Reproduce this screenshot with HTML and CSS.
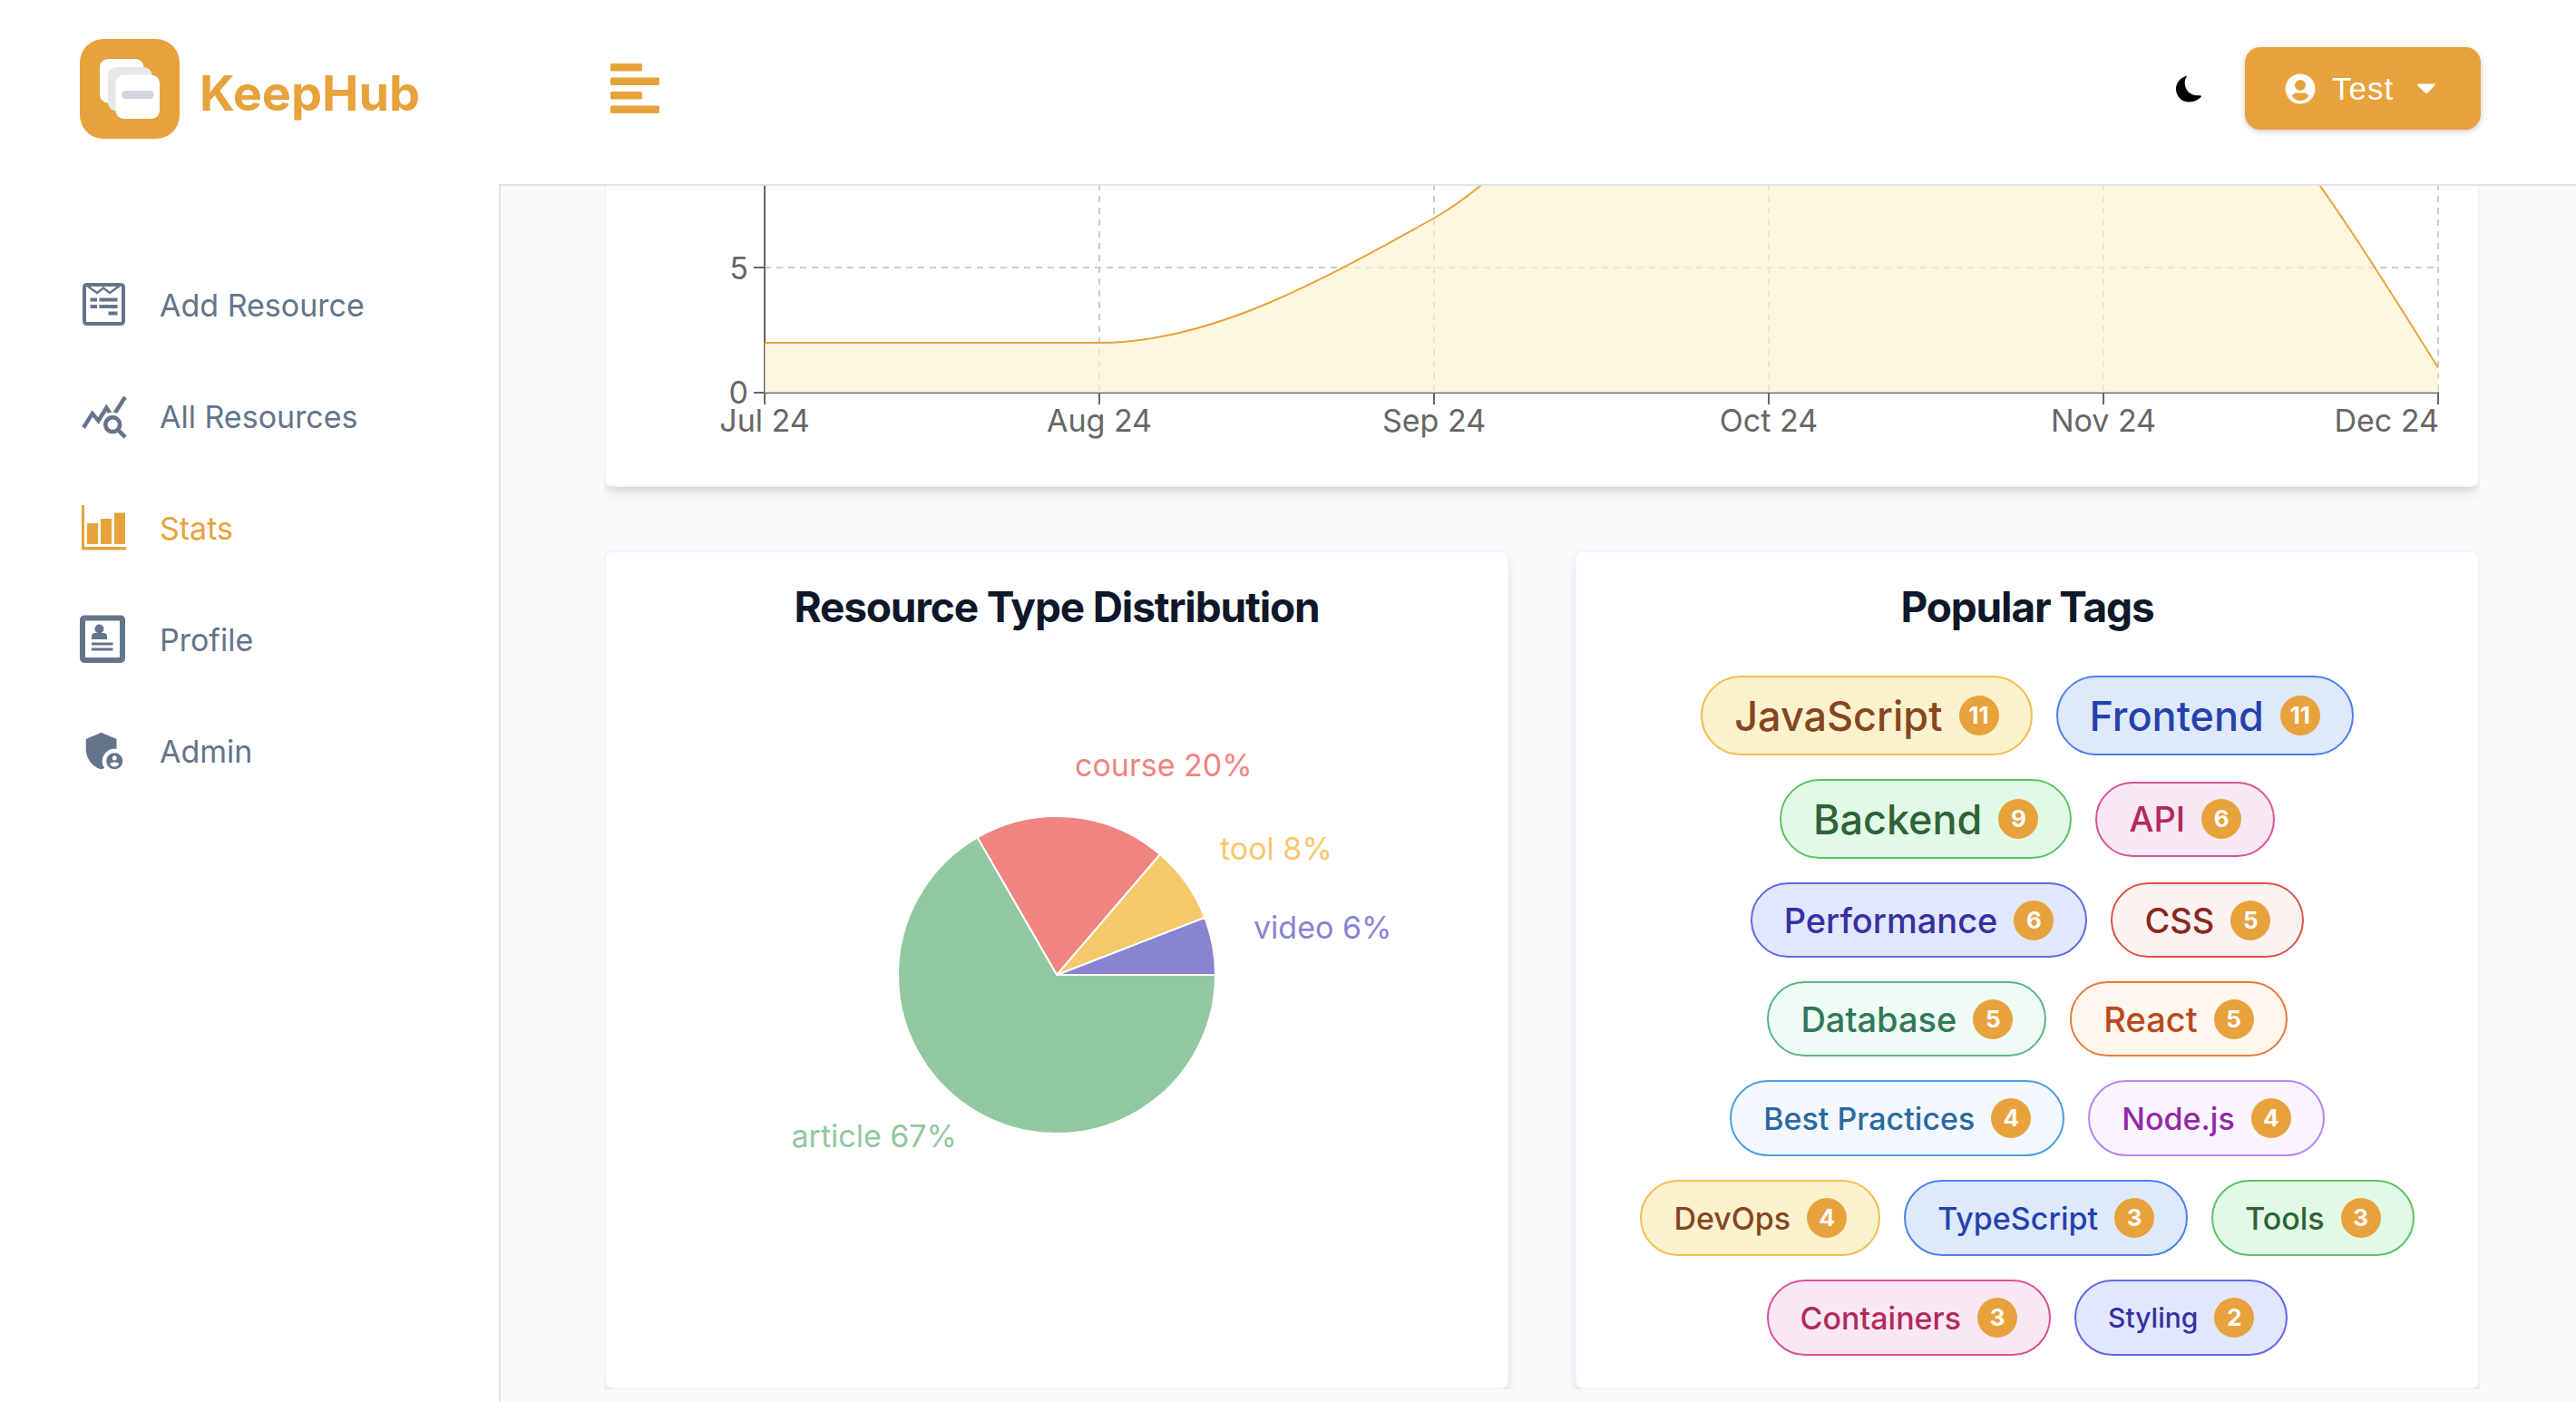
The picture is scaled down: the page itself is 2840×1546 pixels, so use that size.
FILE: index.html
```html
<!DOCTYPE html>
<html lang="en">
<head>
<meta charset="utf-8">
<meta name="viewport" content="width=device-width, initial-scale=1">
<title>KeepHub - Stats</title>
<link rel="stylesheet" href="styles.css">
</head>
<body>
<div class="app">
  <aside class="sidebar">
    <a class="brand" href="#">
      <svg class="brand-mark" viewBox="0 0 110 110" aria-hidden="true">
        <rect width="110" height="110" rx="26" fill="#e8a23c"/>
        <rect x="22" y="22" width="48.500" height="48.500" rx="9" fill="#fff"/>
        <rect x="31" y="31" width="48.500" height="48.500" rx="9" fill="#e5e7eb"/>
        <rect x="39.500" y="39.500" width="48.500" height="48.500" rx="9" fill="#fff"/>
        <rect x="46" y="57" width="35.500" height="9" rx="4.500" fill="#d1d5db"/>
      </svg>
      <span class="brand-name">KeepHub</span>
    </a>
    <nav class="nav">
      <a class="nav-link" href="#">
        <svg class="nav-icon" viewBox="0 0 54 54" aria-hidden="true">
          <rect x="5" y="5" width="43" height="43" rx="2.500" fill="none" stroke="currentColor" stroke-width="4"/>
          <path d="M8 6l11 8 7-5.500 7 5.500 11-8" fill="none" stroke="currentColor" stroke-width="2.500"/>
          <path d="M11.500 21.500h7.500M21.500 21.500h20M11.500 29h7.500M21.500 29h20M31.500 36.500h10" stroke="currentColor" stroke-width="4"/>
        </svg>
        <span>Add Resource</span>
      </a>
      <a class="nav-link" href="#">
        <svg class="nav-icon" viewBox="0 0 24 24" fill="currentColor" aria-hidden="true">
          <path d="M19.880 18.470c.44-.7.7-1.510.7-2.390 0-2.490-2.010-4.500-4.500-4.500s-4.500 2.010-4.500 4.500 2.010 4.500 4.490 4.500c.88 0 1.700-.26 2.390-.7L21.580 23 23 21.580l-3.120-3.110zm-3.800.11a2.500 2.500 0 010-5 2.500 2.500 0 010 5zm-.36-8.500c-.74.02-1.450.18-2.100.45l-.55-.83-3.800 6.180-3.010-3.520-3.630 5.810L1 17l5-8 3 3.500L13 6l2.720 4.080zm2.590.5c-.64-.28-1.330-.45-2.050-.49L21.380 2 23 3.180l-4.690 7.400z"/>
        </svg>
        <span>All Resources</span>
      </a>
      <a class="nav-link active" href="#" aria-current="page">
        <svg class="nav-icon" viewBox="0 0 54 54" fill="currentColor" aria-hidden="true">
          <path d="M2 2h3v46h46v3.500H2zM8 22h12v23H8zM23 17h12v28H23zM38 10.500h12V45H38z"/>
        </svg>
        <span>Stats</span>
      </a>
      <a class="nav-link" href="#">
        <svg class="nav-icon" viewBox="0 0 54 54" fill="currentColor" aria-hidden="true">
          <rect x="3" y="3.500" width="44" height="46.500" rx="2" fill="none" stroke="currentColor" stroke-width="6"/>
          <circle cx="21.500" cy="15.500" r="5"/>
          <path d="M13 27v-3q0-4 4-4h9q4 0 4 4v3zM13 30.500h23.500v3H13zM13 36.500h23.500v3H13z"/>
        </svg>
        <span>Profile</span>
      </a>
      <a class="nav-link" href="#">
        <svg class="nav-icon" viewBox="0 0 24 24" fill="currentColor" aria-hidden="true">
          <path d="M17 11c.34 0 .67.04 1 .09V6.270L10.500 3 3 6.270v4.910c0 4.540 3.200 8.790 7.500 9.820.55-.13 1.080-.32 1.600-.55-.69-.98-1.100-2.170-1.100-3.450 0-3.310 2.690-6 6-6z"/>
          <path d="M17 13c-2.210 0-4 1.790-4 4s1.790 4 4 4 4-1.790 4-4-1.790-4-4-4zm0 1.380c.62 0 1.120.51 1.120 1.120s-.51 1.120-1.120 1.120-1.120-.51-1.120-1.120.5-1.120 1.120-1.120zm0 5.370c-.93 0-1.740-.46-2.240-1.170.05-.72 1.510-1.080 2.240-1.080s2.190.36 2.240 1.080c-.5.71-1.310 1.170-2.240 1.170z"/>
        </svg>
        <span>Admin</span>
      </a>
    </nav>
  </aside>

  <div class="page">
    <header class="topbar">
      <button class="icon-button menu-button" type="button" aria-label="Toggle sidebar">
        <svg viewBox="0 0 56 56" width="56" height="56" fill="currentColor" aria-hidden="true">
          <rect x="1" y="0" width="35" height="8.500" rx="1.500"/>
          <rect x="1" y="15.500" width="54" height="8.500" rx="1.500"/>
          <rect x="1" y="31" width="35" height="8.500" rx="1.500"/>
          <rect x="1" y="46.500" width="54" height="8.500" rx="1.500"/>
        </svg>
      </button>
      <div class="topbar-actions">
        <button class="icon-button theme-button" type="button" aria-label="Dark mode">
          <svg viewBox="0 0 28 30" width="28" height="30" aria-hidden="true">
            <path d="M11 0.800C3.800 3.500 0 9 0 15.200C0 23.200 6.500 29.500 14.500 29.500C20.500 29.500 25.800 26.300 28 23.300C27.600 22.300 27.200 22 26 22.200C17 23.400 10 17.500 9.700 8.800C9.600 6 10.300 4 11.500 2C11.900 1.200 11.800 0.600 11 0.800Z"/>
          </svg>
        </button>
        <button class="user-button" type="button">
          <svg viewBox="0 0 34 34" width="34" height="34" aria-hidden="true">
            <path fill="currentColor" fill-rule="evenodd" d="M17 0.500a16.500 16.500 0 1 0 0 33a16.500 16.500 0 1 0 0-33zM17 7a6 6 0 1 1 0 12a6 6 0 1 1 0-12zM8 24.500C10 20.500 14 21.500 17 21.500S24 20.500 26.500 24.500C24 28.500 20.500 30 17 30S10 28.500 8 24.500z"/>
          </svg>
          <span>Test</span>
          <svg class="caret" viewBox="0 0 20 12" width="20" height="12" aria-hidden="true">
            <path fill="currentColor" d="M1 0.500h18q1.500 0.500 0.300 2l-8 8q-1.300 1.200-2.600 0l-8-8q-1.200-1.500 0.300-2z"/>
          </svg>
        </button>
      </div>
    </header>

    <main class="content">
      <div class="panels">
        <section class="card chart-card" aria-label="Resources per month">
          <svg class="chart" viewBox="0 0 2064 330" role="img" aria-label="Resources added, Jul 24 to Dec 24">
            <g class="grid">
              <path d="M175 90H2021"/>
              <path d="M544-15V228M913-15V228M1282-15V228M1651-15V228M2020-15V228"/>
            </g>
            <g class="axis">
              <path d="M175 228H2021M175 229V-2"/>
              <path d="M163 90H175M163 228H175M175 228V241M544 228V241M913 228V241M1282 228V241M1651 228V241M2020 228V241"/>
            </g>
            <path class="area" d="M175 173H544C667 173 790 104.250 913 35.500C1036-33.250 1159-239.500 1282-239.500C1405-239.500 1528-230.300 1651-212C1774-193.700 1897 3.400 2020 200.500V228H175Z"/>
            <path class="line" d="M175 173H544C667 173 790 104.250 913 35.500C1036-33.250 1159-239.500 1282-239.500C1405-239.500 1528-230.300 1651-212C1774-193.700 1897 3.400 2020 200.500"/>
            <g class="tick-text end">
              <text x="157" y="103">5</text>
              <text x="157" y="240">0</text>
              <text x="2021" y="271">Dec 24</text>
            </g>
            <g class="tick-text middle">
              <text x="175" y="271">Jul 24</text>
              <text x="544" y="271">Aug 24</text>
              <text x="913" y="271">Sep 24</text>
              <text x="1282" y="271">Oct 24</text>
              <text x="1651" y="271">Nov 24</text>
            </g>
          </svg>
        </section>

        <div class="card-row">
          <section class="card">
            <h2 class="card-title">Resource Type Distribution</h2>
            <svg class="pie" viewBox="0 0 994 770" role="img" aria-label="Resource types">
              <g stroke="#fff" stroke-width="2">
                <path fill="#8884d0" d="M497 330H672A175 175 0 0 0 660.200 266.700Z"/>
                <path fill="#f6c86c" d="M497 330L660.200 266.700A175 175 0 0 0 610.900 197.100Z"/>
                <path fill="#ef8480" d="M497 330L610.900 197.100A175 175 0 0 0 409.500 178.400Z"/>
                <path fill="#91c8a1" d="M497 330L409.500 178.400A175 175 0 1 0 672 330Z"/>
              </g>
              <g>
                <text x="517" y="111" fill="#ef8480">course 20%</text>
                <text x="677" y="203" fill="#f6c86c">tool 8%</text>
                <text x="714" y="290" fill="#8884d0">video 6%</text>
                <text x="387" y="520" fill="#91c8a1" text-anchor="end">article 67%</text>
              </g>
            </svg>
          </section>

          <section class="card">
            <h2 class="card-title">Popular Tags</h2>
            <ul class="tags">
              <li class="tag lg yellow">JavaScript <span class="count">11</span></li>
              <li class="tag lg blue">Frontend <span class="count">11</span></li>
              <li class="tag lg green">Backend <span class="count">9</span></li>
              <li class="tag md pink">API <span class="count">6</span></li>
              <li class="tag md indigo">Performance <span class="count">6</span></li>
              <li class="tag md red">CSS <span class="count">5</span></li>
              <li class="tag md teal">Database <span class="count">5</span></li>
              <li class="tag md orange">React <span class="count">5</span></li>
              <li class="tag sm sky">Best Practices <span class="count">4</span></li>
              <li class="tag sm purple">Node.js <span class="count">4</span></li>
              <li class="tag sm yellow">DevOps <span class="count">4</span></li>
              <li class="tag sm blue">TypeScript <span class="count">3</span></li>
              <li class="tag sm green">Tools <span class="count">3</span></li>
              <li class="tag sm pink">Containers <span class="count">3</span></li>
              <li class="tag xs indigo">Styling <span class="count">2</span></li>
            </ul>
          </section>
        </div>
      </div>
    </main>
  </div>
</div>
</body>
</html>
```
FILE: styles.css
```css
* {
  box-sizing: border-box;
}

body {
  margin: 0;
  background: #fff;
  color: #0f172a;
  font-family: Inter, "Liberation Sans", sans-serif;
  font-size: 34px;
}

a {
  color: inherit;
  text-decoration: none;
}

button {
  border: 0;
  background: none;
  padding: 0;
  font: inherit;
  cursor: pointer;
}

svg {
  display: block;
}

.app {
  display: grid;
  grid-template-columns: 550px minmax(0, 1fr);
  min-height: 100vh;
}

/* Sidebar */

.sidebar {
  padding: 43px 0 0 88px;
}

.brand {
  display: flex;
  align-items: center;
  gap: 22px;
}

.brand-mark {
  width: 110px;
  height: 110px;
}

.brand-name {
  padding-top: 10px;
  color: #e8a23c;
  font-size: 54px;
  font-weight: 700;
  line-height: 66px;
}

.nav {
  display: grid;
  gap: 69px;
  margin-top: 156px;
}

.nav-link {
  display: flex;
  align-items: center;
  gap: 34px;
  height: 54px;
  color: #64748b;
}

.nav-link.active {
  color: #e8a23c;
}

.nav-icon {
  width: 54px;
  height: 54px;
}

/* Top bar */

.page {
  display: flex;
  flex-direction: column;
}

.topbar {
  display: flex;
  align-items: center;
  justify-content: space-between;
  height: 203px;
  padding: 0 105px 8px 122px;
}

.menu-button {
  color: #e8a23c;
}

.topbar-actions {
  display: flex;
  align-items: center;
  gap: 48px;
}

.user-button {
  display: flex;
  align-items: center;
  gap: 18px;
  width: 260px;
  height: 91px;
  padding: 0 44px;
  border-radius: 17px;
  background: #e8a23c;
  box-shadow: 0 2px 6px rgba(0, 0, 0, 0.2);
  color: #fff;
  font-family: "Liberation Sans", Arial, sans-serif;
  font-size: 35px;
  letter-spacing: 1px;
}

.caret {
  margin-left: 8px;
}

/* Content */

.content {
  flex: 1;
  padding: 0 106px 14px 114px;
  border-top: 2px solid #e2e3e4;
  border-left: 2px solid #e2e3e4;
  background: #f8fafc;
}

.panels {
  overflow: hidden;
}

.card {
  border: 2px solid #f1f5f9;
  border-radius: 9px;
  background: #fff;
  box-shadow: 0 9px 13px -2px rgba(0, 0, 0, 0.1), 0 4px 9px -4px rgba(0, 0, 0, 0.1);
}

.chart-card {
  border-top: 0;
  border-radius: 0 0 9px 9px;
}

.chart {
  width: 100%;
}

.grid path {
  fill: none;
  stroke: #ccc;
  stroke-width: 2;
  stroke-dasharray: 7 6;
}

.axis path {
  fill: none;
  stroke: #666;
  stroke-width: 2;
}

.area {
  fill: #fcf3cf;
  fill-opacity: 0.65;
}

.line {
  fill: none;
  stroke: #e8a23c;
  stroke-width: 2;
}

.tick-text {
  fill: #666;
}

.middle {
  text-anchor: middle;
}

.end {
  text-anchor: end;
}

.card-row {
  display: grid;
  grid-template-columns: repeat(2, minmax(0, 1fr));
  gap: 72px;
  margin-top: 70px;
}

.card-title {
  margin: 0;
  padding-top: 28px;
  font-size: 46px;
  font-weight: 700;
  letter-spacing: -0.025em;
  line-height: 64px;
  text-align: center;
}

.pie {
  width: 100%;
  margin-top: 44px;
}

.tags {
  display: flex;
  flex-wrap: wrap;
  align-items: center;
  justify-content: center;
  gap: 26px;
  margin: 0;
  padding: 44px 48px 35px;
  list-style: none;
}

.tag {
  display: flex;
  align-items: center;
  gap: 18px;
  height: 84px;
  padding: 0 35px;
  border: 2px solid;
  border-radius: 44px;
  font-weight: 500;
}

.lg { height: 88px; font-size: 45px; }
.md { height: 83px; font-size: 38px; }
.sm { font-size: 34px; }
.xs { font-size: 30px; }

.count {
  width: 44px;
  height: 44px;
  border-radius: 50%;
  background: #e8a23c;
  color: #fff;
  font-size: 26px;
  font-weight: 700;
  line-height: 44px;
  text-align: center;
}

.yellow { background: #fcf1cd; border-color: #f0bf4c; color: #854520; }
.blue { background: #dee9fc; border-color: #4b80ee; color: #2541ab; }
.green { background: #e1fae6; border-color: #5cc265; color: #2f6237; }
.pink { background: #f8e8f3; border-color: #db5297; color: #b12a5b; }
.indigo { background: #e1e7fd; border-color: #6366e8; color: #37309f; }
.red { background: #fcf2f1; border-color: #dd524c; color: #8b2722; }
.teal { background: #eefcf5; border-color: #55b583; color: #327858; }
.orange { background: #fff7ed; border-color: #e8793a; color: #b74a20; }
.sky { background: #f2f8fe; border-color: #4a9fe4; color: #2a699f; }
.purple { background: #faf4fe; border-color: #b785f6; color: #9428a8; }
```
